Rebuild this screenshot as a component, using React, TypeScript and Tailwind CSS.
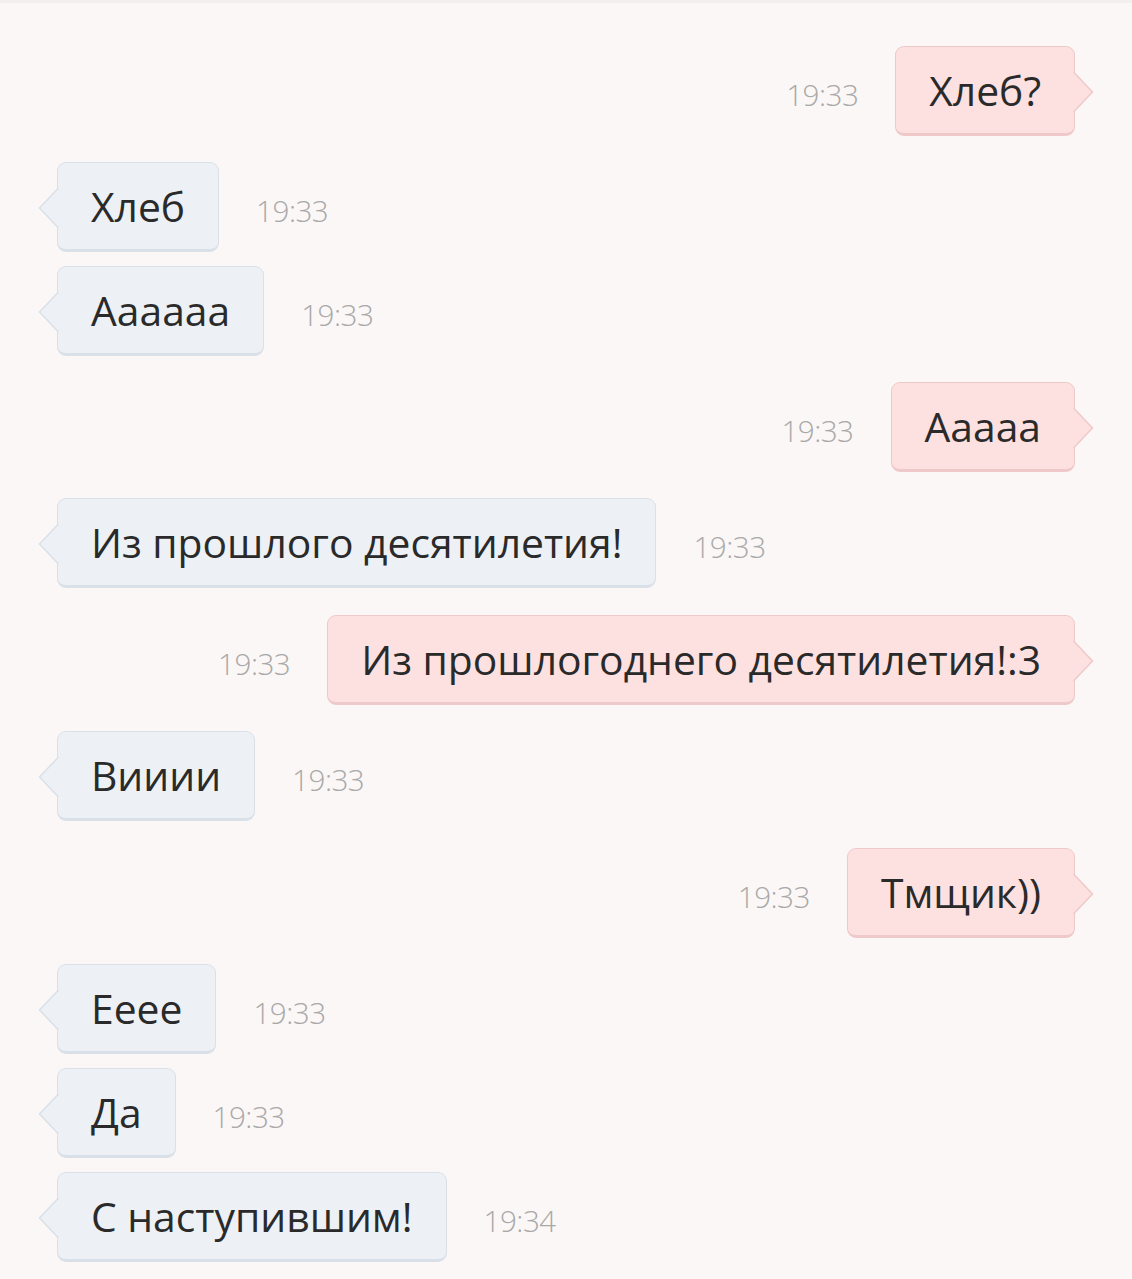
import React from "react";

type Msg = { text: string; time: string; out: boolean; gap: number };

const msgs: Msg[] = [
  { text: "Хлеб?", time: "19:33", out: true, gap: 0 },
  { text: "Хлеб", time: "19:33", out: false, gap: 26 },
  { text: "Аааааа", time: "19:33", out: false, gap: 14 },
  { text: "Ааааа", time: "19:33", out: true, gap: 26 },
  { text: "Из прошлого десятилетия!", time: "19:33", out: false, gap: 26 },
  { text: "Из прошлогоднего десятилетия!:3", time: "19:33", out: true, gap: 27 },
  { text: "Вииии", time: "19:33", out: false, gap: 26 },
  { text: "Тмщик))", time: "19:33", out: true, gap: 27 },
  { text: "Еeee", time: "19:33", out: false, gap: 26 },
  { text: "Да", time: "19:33", out: false, gap: 14 },
  { text: "С наступившим!", time: "19:34", out: false, gap: 14 },
];

function Bubble({ m }: { m: Msg }) {
  const time = (
    <span className="text-[29.6px] font-light text-[#a9a9a9] tracking-[-0.5px]">{m.time}</span>
  );
  if (m.out) {
    return (
      <div className="flex items-baseline justify-end gap-[37px]" style={{ marginTop: m.gap }}>
        {time}
        <div className="relative rounded-[9px] border-[1.5px] border-b-[3px] border-[#efc9ca] bg-[#fde1e1] px-[33px] py-[17px] text-[40.8px] leading-[52px] text-[#2a2a2a]">
          {m.text}
          <svg className="absolute right-[-20px] top-1/2 -translate-y-1/2 mt-[2px]" width="21" height="40" viewBox="0 0 21 40">
            <path d="M0 0 L1 0 L19.5 20 L1 40 L0 40 Z" fill="#fde1e1" />
            <path d="M0.5 0 L19.5 20 L0.5 40" fill="none" stroke="#efc9ca" strokeWidth="1.5" />
          </svg>
        </div>
      </div>
    );
  }
  return (
    <div className="flex items-baseline justify-start gap-[37px]" style={{ marginTop: m.gap }}>
      <div className="relative rounded-[9px] border-[1.5px] border-b-[3px] border-[#d9e0e8] bg-[#edf1f6] px-[33px] py-[17px] text-[40.8px] leading-[52px] text-[#2a2a2a]">
        {m.text}
        <svg className="absolute left-[-20px] top-1/2 -translate-y-1/2 mt-[2px]" width="21" height="40" viewBox="0 0 21 40">
          <path d="M21 0 L20 0 L1.5 20 L20 40 L21 40 Z" fill="#edf1f6" />
          <path d="M20.5 0 L1.5 20 L20.5 40" fill="none" stroke="#d9e0e8" strokeWidth="1.5" />
        </svg>
      </div>
      {time}
    </div>
  );
}

export default function App() {
  return (
    <div
      className="min-h-[1279px] w-[1132px] bg-[#fbf7f6] px-[57px] pt-[43px] border-t-[3px] border-[#f3efee]"
      style={{ fontFamily: '"Open Sans", "Noto Sans", sans-serif' }}
    >
      {msgs.map((m, i) => (
        <Bubble key={i} m={m} />
      ))}
    </div>
  );
}
